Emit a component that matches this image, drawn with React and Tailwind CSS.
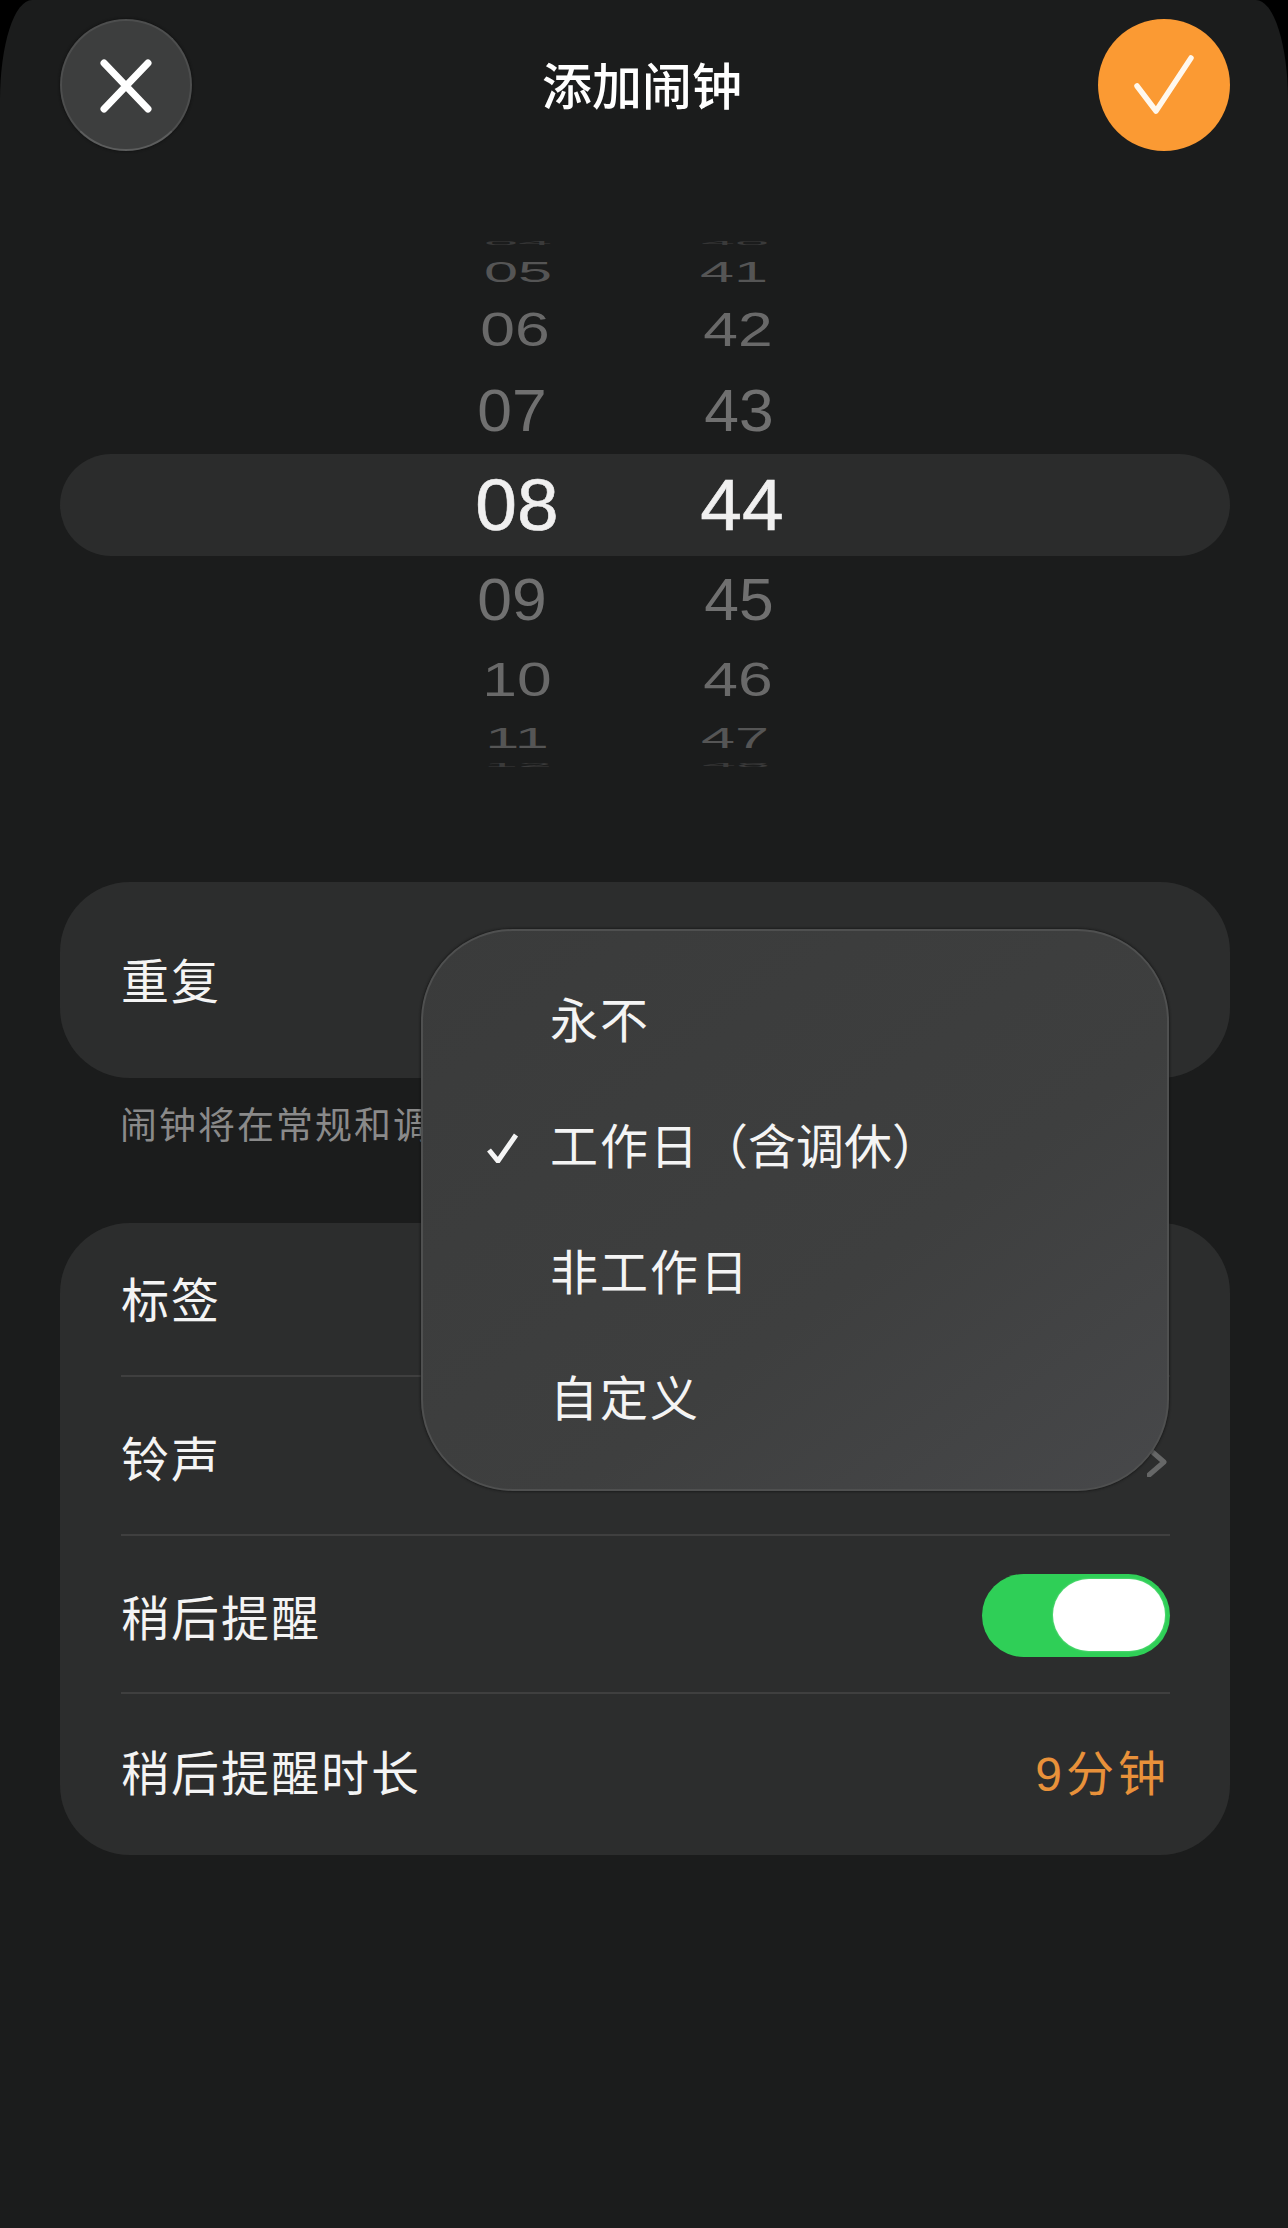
const cjk = 'font-["Liberation_Sans","Noto_Sans_CJK_SC",sans-serif]'

const HOURS = [
  { h: 'h-[18px]', a: '04', b: '40', size: 'text-[60px] scale-x-[1.02] scale-y-[0.1] text-[#3a3a3a]', ax: 'translate-x-[1px]', bx: '-translate-x-[7px]' },
  { h: 'h-[40px]', a: '05', b: '41', size: 'text-[60px] scale-x-[1.02] scale-y-[0.48] text-[#555555]', ax: 'translate-x-[1px]', bx: '-translate-x-[8px]' },
  { h: 'h-[76px]', a: '06', b: '42', size: 'text-[60px] scale-x-[1.04] scale-y-[0.8] text-[#696969]', ax: '-translate-x-[2px]', bx: '-translate-x-[4px]' },
  { h: 'h-[86px]', a: '07', b: '43', size: 'text-[60px] scale-x-[1.04] text-[#707070]', ax: '-translate-x-[5px]', bx: '-translate-x-[3px]' },
]
const LOWER = [
  { h: 'h-[88px]', a: '09', b: '45', size: 'text-[60px] scale-x-[1.04] text-[#707070]', ax: '-translate-x-[5px]', bx: '-translate-x-[3px]' },
  { h: 'h-[72px]', a: '10', b: '46', size: 'text-[60px] scale-x-[1.04] scale-y-[0.8] text-[#696969]', ax: 'translate-x-[0px]', bx: '-translate-x-[4px]' },
  { h: 'h-[44px]', a: '11', b: '47', size: 'text-[60px] scale-x-[1.02] scale-y-[0.48] text-[#555555]', ax: 'translate-x-[0px]', bx: '-translate-x-[7px]' },
  { h: 'h-[10px]', a: '12', b: '48', size: 'text-[60px] scale-x-[1.02] scale-y-[0.1] text-[#3a3a3a]', ax: 'translate-x-[1px]', bx: '-translate-x-[6px]' },
]

function WheelRow({ row }) {
  return (
    <div className={`${row.h} flex pl-[342px] items-center`}>
      <div className={`w-[230px] text-center leading-none ${row.size} ${row.ax}`}>{row.a}</div>
      <div className={`w-[220px] text-center leading-none ${row.size} ${row.bx}`}>{row.b}</div>
    </div>
  )
}

function Row({ label, h, line, shift, children }) {
  return (
    <div className={`${h} flex items-center justify-between relative`}>
      <span className={`tracking-[2px] ${shift || ''}`}>{label}</span>
      {children}
      {line && <div className="absolute left-0 right-0 bottom-0 h-[2px] bg-[#3f3f3f]" />}
    </div>
  )
}

function MenuItem({ label, checked }) {
  return (
    <div className="h-[126px] flex items-center">
      <div className="w-[63px] ml-[64px] flex">
        {checked && (
          <svg width="32" height="30" viewBox="0 0 32 30" fill="none">
            <path d="M2 17 L11 28 L29 2" stroke="#f5f5f5" strokeWidth="5" />
          </svg>
        )}
      </div>
      <span className="tracking-[2px]">{label}</span>
    </div>
  )
}

export default function App() {
  return (
    <div className={`min-h-[2228px] w-[1288px] bg-black ${cjk}`}>
      <div className="relative h-[2228px] bg-[#1b1c1c] rounded-t-[32px_100px] text-[48px] text-[#f4f4f4] overflow-hidden">
        <header className="flex items-center justify-between pl-[60px] pr-[58px] pt-[19px]">
          <button className="w-[132px] h-[132px] rounded-full bg-[#3d3e3e] border-2 border-[#4d4e4e] border-b-[#5c5d5d] shadow-[0_0_3px_#0c0c0c] flex items-center justify-center">
            <svg width="60" height="60" viewBox="0 0 60 60" fill="none">
              <path d="M8 8 L52 54 M52 8 L8 54" stroke="#ffffff" strokeWidth="7" strokeLinecap="round" />
            </svg>
          </button>
          <h1 className="text-[50px] mt-[6px] -translate-x-[3px] font-medium text-white">添加闹钟</h1>
          <button className="w-[132px] h-[132px] rounded-full bg-[#fb9a33] flex items-center justify-center">
            <svg width="60" height="60" viewBox="0 0 60 60" fill="none">
              <path d="M3 31 L22 56 L57 3" stroke="#fff8ee" strokeWidth="5.5" strokeLinecap="round" strokeLinejoin="round" />
            </svg>
          </button>
        </header>

        <section className="mt-[83px] ml-[60px] mr-[58px]">
          {HOURS.map(r => <WheelRow key={r.a} row={r} />)}
          <div className="h-[102px] rounded-[51px] bg-[#2b2c2c] flex pl-[342px] items-center text-[72px] leading-none text-[#f0f0f0] [-webkit-text-stroke:0.6px_#f0f0f0]">
            <div className="w-[230px] text-center scale-x-[1.04]">08</div>
            <div className="w-[220px] text-center scale-x-[1.04]">44</div>
          </div>
          {LOWER.map(r => <WheelRow key={r.a} row={r} />)}
        </section>

        <section className="mt-[112px] ml-[60px] mr-[58px] h-[196px] rounded-[70px] bg-[#2c2d2d] pl-[61px] pr-[60px] flex items-center">
          <span className="tracking-[2px] translate-y-[3px]">重复</span>
        </section>
        <p className="mt-[24px] ml-[120px] h-[44px] text-[37px] leading-[44px] tracking-[2px] text-[#8a8a8a] translate-y-[3px]">闹钟将在常规和调休</p>

        <section className="mt-[77px] ml-[60px] mr-[58px] h-[632px] rounded-[70px] bg-[#2c2d2d] pl-[61px] pr-[60px]">
          <Row label="标签" h="h-[154px]" shift="translate-y-[2px]" line />
          <Row label="铃声" h="h-[159px]" shift="translate-y-[4px]" line>
            <svg width="20" height="30" viewBox="0 0 20 30" fill="none" className="mr-[3px] translate-y-[5px]">
              <path d="M2 2 L17 15 L2 28" stroke="#666767" strokeWidth="5" strokeLinecap="round" strokeLinejoin="round" />
            </svg>
          </Row>
          <Row label="稍后提醒" h="h-[158px]" shift="translate-y-[5px]" line>
            <div className="w-[188px] h-[83px] rounded-full bg-[#2fcf57] flex items-center justify-end pr-[5px]">
              <div className="w-[112px] h-[72px] rounded-full bg-white shadow-[0_0_2px_#ffffff80]" />
            </div>
          </Row>
          <Row label="稍后提醒时长" h="h-[161px]">
            <span className="tracking-[4px] text-[#e8913a]">9分钟</span>
          </Row>
        </section>

        <div className="absolute left-[421px] top-[929px] w-[748px] h-[562px] rounded-[92px] bg-gradient-to-br from-[#3a3b3b] via-[#3e3f3f] via-60% to-[#47484a] border-2 border-[#4f5050] shadow-[0_0_3px_#0c0c0c] pt-[28px] text-[#f4f4f4]">
          <MenuItem label="永不" />
          <MenuItem label={<>工作日<span className="tracking-[0px]">（含调休）</span></>} checked />
          <MenuItem label="非工作日" />
          <MenuItem label="自定义" />
        </div>
      </div>
    </div>
  )
}
